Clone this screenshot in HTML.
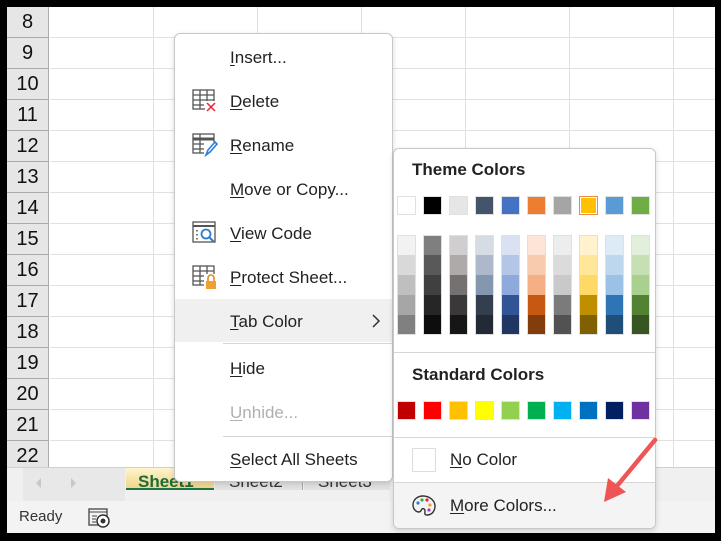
<!DOCTYPE html>
<html><head><meta charset="utf-8"><style>
*{margin:0;padding:0;box-sizing:border-box}
body{width:721px;height:541px;background:#000;position:relative;overflow:hidden;font-family:"Segoe UI","Liberation Sans",sans-serif}
.a{position:absolute}
.rh{position:absolute;left:7px;width:42px;background:#e6e6e6;border-bottom:1px solid #ababab;border-right:1px solid #ababab;text-align:center;font-size:20px;color:#111;line-height:30px}
.mi{position:absolute;left:230px;font-size:17px;color:#222}
.u{text-decoration:underline;text-underline-offset:2px}
.sw{position:absolute;width:19px;height:19px;border:1px solid #e0e0e0}
</style></head><body>
<div class="a" style="left:7px;top:7px;width:708px;height:526px;background:#fff"></div>
<svg class="a" style="left:0;top:0" width="721" height="541">
<g stroke="#e1e1e1" stroke-width="1">
<line x1="153.5" y1="7" x2="153.5" y2="467"/><line x1="257.5" y1="7" x2="257.5" y2="467"/><line x1="361.5" y1="7" x2="361.5" y2="467"/><line x1="465.5" y1="7" x2="465.5" y2="467"/><line x1="569.5" y1="7" x2="569.5" y2="467"/><line x1="673.5" y1="7" x2="673.5" y2="467"/>
</g>
<g stroke="#e1e1e1">
<line x1="50" y1="37.5" x2="715" y2="37.5"/><line x1="50" y1="68.5" x2="715" y2="68.5"/><line x1="50" y1="99.5" x2="715" y2="99.5"/><line x1="50" y1="130.5" x2="715" y2="130.5"/><line x1="50" y1="161.5" x2="715" y2="161.5"/><line x1="50" y1="192.5" x2="715" y2="192.5"/><line x1="50" y1="223.5" x2="715" y2="223.5"/><line x1="50" y1="254.5" x2="715" y2="254.5"/><line x1="50" y1="285.5" x2="715" y2="285.5"/><line x1="50" y1="316.5" x2="715" y2="316.5"/><line x1="50" y1="347.5" x2="715" y2="347.5"/><line x1="50" y1="378.5" x2="715" y2="378.5"/><line x1="50" y1="409.5" x2="715" y2="409.5"/><line x1="50" y1="440.5" x2="715" y2="440.5"/>
</g></svg>
<div class="rh" style="top:7px;height:31px">8</div>
<div class="rh" style="top:38px;height:31px">9</div>
<div class="rh" style="top:69px;height:31px">10</div>
<div class="rh" style="top:100px;height:31px">11</div>
<div class="rh" style="top:131px;height:31px">12</div>
<div class="rh" style="top:162px;height:31px">13</div>
<div class="rh" style="top:193px;height:31px">14</div>
<div class="rh" style="top:224px;height:31px">15</div>
<div class="rh" style="top:255px;height:31px">16</div>
<div class="rh" style="top:286px;height:31px">17</div>
<div class="rh" style="top:317px;height:31px">18</div>
<div class="rh" style="top:348px;height:31px">19</div>
<div class="rh" style="top:379px;height:31px">20</div>
<div class="rh" style="top:410px;height:31px">21</div>
<div class="rh" style="top:441px;height:26px;border-bottom:none;line-height:30px">22</div>
<div class="a" style="left:7px;top:467px;width:708px;height:34px;background:#f0f0f0;border-top:1px solid #d0d0d0"></div>
<div class="a" style="left:23px;top:468px;width:102px;height:33px;background:#e8e8e8"></div>
<div class="a" style="left:36px;top:478px;width:0;height:0;border-top:5px solid transparent;border-bottom:5px solid transparent;border-right:5px solid #c8c8c8"></div>
<div class="a" style="left:71px;top:478px;width:0;height:0;border-top:5px solid transparent;border-bottom:5px solid transparent;border-left:5px solid #c8c8c8"></div>
<div class="a" style="left:126px;top:468px;width:88px;height:22px;background:linear-gradient(#fff4cc,#f1d58a);border-bottom:2px solid #217346;color:#1e6b3a;font-weight:bold;font-size:17px;padding-left:12px;line-height:28px;overflow:hidden">Sheet1</div>
<div class="a" style="left:215px;top:468px;width:88px;height:22px;background:#e2e2e2;color:#333;font-size:17px;padding-left:14px;line-height:28px;overflow:hidden;border-right:1px solid #aaa">Sheet2</div>
<div class="a" style="left:304px;top:468px;width:86px;height:22px;background:#e2e2e2;color:#333;font-size:17px;padding-left:14px;line-height:28px;overflow:hidden">Sheet3</div>
<div class="a" style="left:7px;top:501px;width:708px;height:32px;background:#f3f3f3"></div>
<div class="a" style="left:19px;top:508px;font-size:15px;color:#333">Ready</div>
<svg class="a" style="left:88px;top:508px" width="24" height="20"><rect x="1" y="1" width="18" height="16" fill="none" stroke="#444" stroke-width="1.3"/><line x1="1" y1="4" x2="19" y2="4" stroke="#444"/><line x1="4" y1="8" x2="9" y2="8" stroke="#444"/><line x1="4" y1="11" x2="8" y2="11" stroke="#444"/><line x1="4" y1="14" x2="8" y2="14" stroke="#444"/><circle cx="15" cy="13" r="6" fill="#fff" stroke="#333" stroke-width="1.5"/><circle cx="15" cy="13" r="2.5" fill="#333"/></svg>
<div class="a" style="left:174px;top:33px;width:219px;height:449px;background:#fff;border:1px solid #c8c8c8;border-radius:6px;box-shadow:0 2px 6px rgba(0,0,0,.15)"></div>
<div class="a" style="left:175px;top:299px;width:217px;height:43px;background:#f0f0f0"></div>
<div class="a" style="left:223px;top:343px;width:169px;height:1px;background:#d6d6d6"></div>
<div class="a" style="left:223px;top:436px;width:169px;height:1px;background:#d6d6d6"></div>
<div class="mi" style="top:48px"><span class="u">I</span>nsert...</div>
<div class="mi" style="top:92px"><span class="u">D</span>elete</div>
<div class="mi" style="top:136px"><span class="u">R</span>ename</div>
<div class="mi" style="top:180px"><span class="u">M</span>ove or Copy...</div>
<div class="mi" style="top:224px"><span class="u">V</span>iew Code</div>
<div class="mi" style="top:268px"><span class="u">P</span>rotect Sheet...</div>
<div class="mi" style="top:312px"><span class="u">T</span>ab Color</div>
<div class="mi" style="top:359px"><span class="u">H</span>ide</div>
<div class="mi" style="top:403px;color:#b0b0b0"><span class="u">U</span>nhide...</div>
<div class="mi" style="top:450px"><span class="u">S</span>elect All Sheets</div>
<svg class="a" style="left:370px;top:313px" width="12" height="16"><path d="M3 2l6 6-6 6" fill="none" stroke="#333" stroke-width="1.5"/></svg>
<svg class="a" style="left:192px;top:89px" width="26" height="24"><g fill="none" stroke="#555" stroke-width="1.3"><rect x="1" y="1" width="21" height="19"/><line x1="1" y1="6" x2="22" y2="6"/><line x1="1" y1="11" x2="22" y2="11"/><line x1="1" y1="16" x2="12" y2="16"/><line x1="8" y1="1" x2="8" y2="20"/><line x1="15" y1="1" x2="15" y2="12"/></g><rect x="13" y="12" width="12" height="12" fill="#fff"/><path d="M15 14l8 8M23 14l-8 8" stroke="#e23" stroke-width="1.5"/></svg>
<svg class="a" style="left:192px;top:133px" width="26" height="24"><g fill="none" stroke="#555" stroke-width="1.3"><rect x="1" y="1" width="21" height="19"/><line x1="1" y1="6" x2="22" y2="6" stroke-width="3"/><line x1="1" y1="11" x2="22" y2="11"/><line x1="1" y1="16" x2="12" y2="16"/><line x1="8" y1="1" x2="8" y2="20"/></g><rect x="12" y="9" width="12" height="14" fill="#fff"/><path d="M14 22l2-5 7-8 2 2-7 8z" fill="none" stroke="#2a7fd4" stroke-width="1.6"/></svg>
<svg class="a" style="left:192px;top:221px" width="26" height="24"><g fill="none" stroke="#555" stroke-width="1.3"><rect x="1" y="1" width="22" height="20"/><line x1="1" y1="5" x2="23" y2="5" stroke-width="2"/></g><circle cx="14" cy="13" r="4.5" fill="#fff" stroke="#2a7fd4" stroke-width="1.8"/><line x1="17" y1="16" x2="22" y2="21" stroke="#2a7fd4" stroke-width="2"/><g fill="#777"><rect x="4" y="9" width="2" height="1.5"/><rect x="4" y="13" width="2" height="1.5"/><rect x="4" y="17" width="2" height="1.5"/></g></svg>
<svg class="a" style="left:192px;top:265px" width="26" height="26"><g fill="none" stroke="#555" stroke-width="1.3"><rect x="1" y="1" width="21" height="19"/><line x1="1" y1="6" x2="22" y2="6"/><line x1="1" y1="11" x2="12" y2="11"/><line x1="1" y1="16" x2="12" y2="16"/><line x1="8" y1="1" x2="8" y2="20"/><line x1="15" y1="1" x2="15" y2="10"/></g><rect x="12" y="9" width="14" height="16" fill="#fff"/><path d="M16 16v-3a3 3 0 0 1 6 0v3" fill="none" stroke="#e08a1e" stroke-width="1.6"/><rect x="14" y="16" width="10" height="8" fill="#f0a030"/></svg>
<div class="a" style="left:393px;top:148px;width:263px;height:381px;background:#fff;border:1px solid #c8c8c8;border-radius:6px;box-shadow:0 2px 6px rgba(0,0,0,.15);overflow:hidden">
<div class="a" style="left:0;top:333px;width:263px;height:48px;background:#f4f4f4"></div>
</div>
<div class="a" style="left:412px;top:160px;font-size:17px;font-weight:bold;color:#222">Theme Colors</div>
<div class="a" style="left:412px;top:365px;font-size:17px;font-weight:bold;color:#222">Standard Colors</div>
<div class="a" style="left:394px;top:352px;width:261px;height:1px;background:#d6d6d6"></div>
<div class="a" style="left:394px;top:437px;width:261px;height:1px;background:#d6d6d6"></div>
<div class="a" style="left:394px;top:482px;width:261px;height:1px;background:#d6d6d6"></div>
<div id="sw"></div>
<div class="a" style="left:412px;top:448px;width:24px;height:24px;border:1px solid #ddd"></div>
<div class="a" style="left:450px;top:450px;font-size:17px;color:#222"><span class="u">N</span>o Color</div>
<div class="a" style="left:450px;top:496px;font-size:17px;color:#222"><span class="u">M</span>ore Colors...</div>
<svg class="a" style="left:411px;top:494px" width="26" height="24"><path d="M12 2C6 2 2 6 2 11c0 4 3 7 6 7 2 0 2-2 3-3 1-1 3 0 3 2s-1 4 2 4c5 0 8-4 8-9S19 2 12 2z" fill="none" stroke="#333" stroke-width="1.4"/><circle cx="7" cy="9" r="1.6" fill="#2a7fd4"/><circle cx="11" cy="6" r="1.6" fill="#3aa745"/><circle cx="16" cy="6" r="1.6" fill="#e23"/><circle cx="19" cy="11" r="1.6" fill="#f0a030"/><circle cx="18" cy="16" r="1.6" fill="#a040c0"/></svg>
<svg class="a" style="left:0;top:0" width="721" height="541"><line x1="655" y1="440" x2="612" y2="492" stroke="#ee5555" stroke-width="4.5" stroke-linecap="round"/><path d="M604 502l4-24 18 14z" fill="#ee5555"/></svg>
<script>
var xs=[397,423,449,475,501,527,553,579,605,631];
var top1=['fff','000','e7e6e6','44546a','4472c4','ed7d31','a5a5a5','ffc000','5b9bd5','70ad47'];
var sh=[['f2f2f2','d9d9d9','bfbfbf','a6a6a6','808080'],['7f7f7f','595959','404040','262626','0d0d0d'],['d0cece','aeaaaa','757171','3a3838','171616'],['d6dce4','adb9ca','8497b0','333f4f','222b35'],['d9e1f2','b4c6e7','8ea9db','305496','203764'],['fce4d6','f8cbad','f4b084','c65911','833c0c'],['ededed','dbdbdb','c9c9c9','7b7b7b','525252'],['fff2cc','ffe699','ffd966','bf8f00','806000'],['ddebf7','bdd7ee','9bc2e6','2f75b5','1f4e78'],['e2efda','c6e0b4','a9d08e','548235','375623']];
var std=['c00000','ff0000','ffc000','ffff00','92d050','00b050','00b0f0','0070c0','002060','7030a0'];
var h='';
for(var i=0;i<10;i++){
h+='<div class="sw" style="left:'+xs[i]+'px;top:196px;background:#'+top1[i]+(i==7?';border:1px solid #e84;box-shadow:inset 0 0 0 1px #fff':'')+'"></div>';
for(var j=0;j<5;j++)h+='<div class="a" style="left:'+xs[i]+'px;top:'+(235+j*20)+'px;width:19px;height:20px;background:#'+sh[i][j]+';border-left:1px solid #e0e0e0;border-right:1px solid #e0e0e0;'+(j==0?'border-top:1px solid #e0e0e0;':'')+(j==4?'border-bottom:1px solid #e0e0e0;':'')+'"></div>';
h+='<div class="sw" style="left:'+xs[i]+'px;top:401px;background:#'+std[i]+'"></div>';
}
document.getElementById('sw').outerHTML=h;
</script>
</body></html>
